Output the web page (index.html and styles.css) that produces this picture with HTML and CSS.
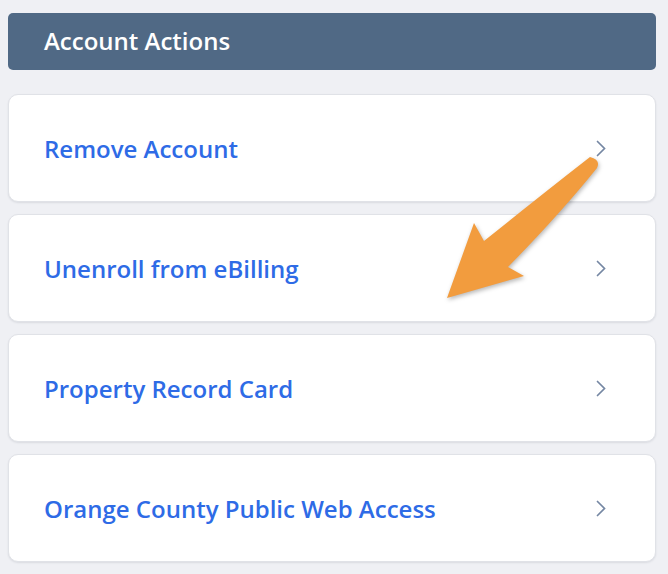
FILE: index.html
```html
<!DOCTYPE html>
<html lang="en">
<head>
<meta charset="utf-8">
<title>Account Actions</title>
<link rel="stylesheet" href="styles.css">
</head>
<body>
<div class="page">
  <div class="panel-header">Account Actions</div>
  <ul class="actions">
    <li class="action-card"><a class="action-link" href="#">Remove Account</a><svg class="chevron" viewBox="0 0 10 17" width="10" height="17"><polyline points="1.5,1.5 8.5,8.5 1.5,15.5"/></svg></li>
    <li class="action-card"><a class="action-link" href="#">Unenroll from eBilling</a><svg class="chevron" viewBox="0 0 10 17" width="10" height="17"><polyline points="1.5,1.5 8.5,8.5 1.5,15.5"/></svg></li>
    <li class="action-card"><a class="action-link" href="#">Property Record Card</a><svg class="chevron" viewBox="0 0 10 17" width="10" height="17"><polyline points="1.5,1.5 8.5,8.5 1.5,15.5"/></svg></li>
    <li class="action-card"><a class="action-link" href="#">Orange County Public Web Access</a><svg class="chevron" viewBox="0 0 10 17" width="10" height="17"><polyline points="1.5,1.5 8.5,8.5 1.5,15.5"/></svg></li>
  </ul>
  <svg class="annotation-arrow" viewBox="0 0 668 574" width="668" height="574">
    <path d="M590,157 Q540,196 484,241 L474,223 L447,298 L524,276 L508,267 Q560,214 597,168 Q601,160 590,157 Z"/>
  </svg>
</div>
</body>
</html>
```
FILE: styles.css
```css
html, body {
  margin: 0;
  padding: 0;
  background: #eff0f4;
}
body {
  font-family: "Open Sans", "Noto Sans", "Liberation Sans", sans-serif;
  width: 668px;
  height: 574px;
  overflow: hidden;
}
.page {
  position: relative;
  padding: 13px 12px 0 8px;
}
.panel-header {
  height: 57px;
  box-sizing: border-box;
  background: #506985;
  border-radius: 5px;
  color: #ffffff;
  font-size: 24px;
  font-weight: 600;
  display: flex;
  align-items: center;
  padding-left: 36px;
  padding-bottom: 2px;
  margin-bottom: 24px;
}
.actions {
  list-style: none;
  margin: 0;
  padding: 0;
  display: flex;
  flex-direction: column;
  gap: 12px;
}
.action-card {
  height: 108px;
  box-sizing: border-box;
  background: #ffffff;
  border: 1px solid #e0e2e7;
  border-radius: 10px;
  box-shadow: 0 1px 2px rgba(30, 40, 60, 0.10);
  display: flex;
  align-items: center;
  justify-content: space-between;
  padding: 0 49px 0 35px;
}
.action-link {
  color: #2e6be6;
  text-decoration: none;
  font-size: 24px;
  font-weight: 600;
}
.chevron {
  fill: none;
  stroke: #7587a3;
  stroke-width: 1.7;
  stroke-linecap: round;
  stroke-linejoin: miter;
}
.annotation-arrow {
  position: absolute;
  left: 0;
  top: 0;
  pointer-events: none;
}
.annotation-arrow path {
  fill: #f29c3e;
  filter: drop-shadow(1px 2px 2px rgba(0, 0, 0, 0.28));
}
```
